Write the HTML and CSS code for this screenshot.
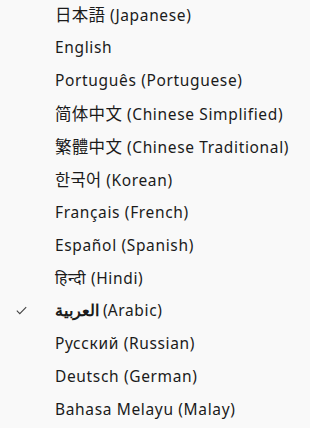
FILE: index.html
```html
<!DOCTYPE html>
<html>
    <head>
        <link rel="stylesheet" href="styles.css">
    </head>

    <body>
        <ul class="menu">
            <li class="item"><span class="mark"></span><span class="label"><span class="cjk">日本語</span> (Japanese)</span></li>
            <li class="item"><span class="mark"></span><span class="label">English</span></li>
            <li class="item"><span class="mark"></span><span class="label">Português (Portuguese)</span></li>
            <li class="item"><span class="mark"></span><span class="label"><span class="cjk">简体中文</span> (Chinese Simplified)</span></li>
            <li class="item"><span class="mark"></span><span class="label"><span class="cjk">繁體中文</span> (Chinese Traditional)</span></li>
            <li class="item"><span class="mark"></span><span class="label"><span class="cjk">한국어</span> (Korean)</span></li>
            <li class="item"><span class="mark"></span><span class="label">Français (French)</span></li>
            <li class="item"><span class="mark"></span><span class="label">Español (Spanish)</span></li>
            <li class="item"><span class="mark"></span><span class="label">हिन्दी (Hindi)</span></li>
            <li class="item checked">
                <span class="mark">
                    <svg width="11" height="9" viewBox="0 0 11 9"><path d="M0.8 4.6 L3.8 7.6 L10.2 1.2" fill="none" stroke="#444" stroke-width="1.1"/></svg>
                </span>
                <span class="label"><span dir="rtl" class="ar">العربية</span> (Arabic)</span>
            </li>
            <li class="item"><span class="mark"></span><span class="label">Русский (Russian)</span></li>
            <li class="item"><span class="mark"></span><span class="label">Deutsch (German)</span></li>
            <li class="item"><span class="mark"></span><span class="label">Bahasa Melayu (Malay)</span></li>
        </ul>
    </body>
</html>
```

FILE: styles.css
```css
body {
    margin: 0;
    background: #f9f9f9;
    color: #1b1b1b;
    font-family: "Noto Sans", "Noto Sans CJK JP", sans-serif;
    font-size: 15.5px;
}

.menu {
    list-style: none;
    margin: -2px 0 0 0;
    padding: 0;
}

.item {
    display: flex;
    align-items: center;
    height: 32.9px;
}

.mark {
    width: 55px;
    flex: none;
    display: flex;
    justify-content: flex-start;
    padding-left: 16px;
    box-sizing: border-box;
}

.label {
    white-space: nowrap;
    letter-spacing: 0.65px;
}

.cjk {
    font-size: 16.5px;
    letter-spacing: 0.3px;
}

.ar {
    font-weight: bold;
    letter-spacing: 0;
}
```
